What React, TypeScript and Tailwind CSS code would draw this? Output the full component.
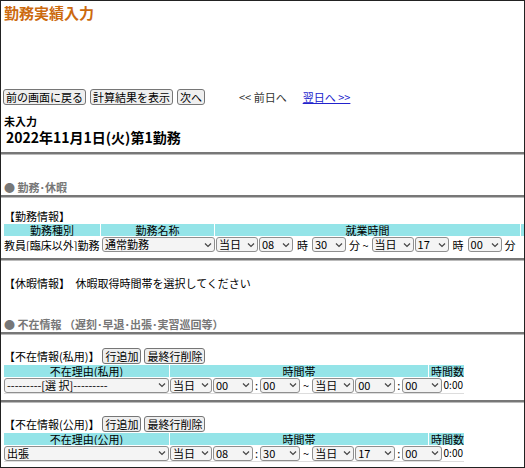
import * as React from "react";

const font = { fontFamily: '"Noto Sans CJK JP", "Noto Sans", sans-serif' };

function Sel({ w, v }: { w: number; v: string }) {
  return (
    <span
      style={{ width: w }}
      className="inline-flex h-[15px] shrink-0 items-center justify-between overflow-hidden rounded-[3px] border border-[#8f8f8f] bg-[#f4f4f4] pl-[2px] pr-[2px] text-[11px] leading-[13px] text-black"
    >
      <span className="whitespace-nowrap">{v}</span>
      <svg width="8" height="6" viewBox="0 0 8 6" className="shrink-0">
        <path d="M1 1.5 L4 4.5 L7 1.5" fill="none" stroke="#444" strokeWidth="1.2" />
      </svg>
    </span>
  );
}

function Btn({ children }: { children: React.ReactNode }) {
  return (
    <span className="inline-flex h-[16px] items-center overflow-hidden rounded-[3px] border border-[#767676] bg-[#efefef] px-[2px] text-[11px] leading-[14px] text-black">
      {children}
    </span>
  );
}

function Hr() {
  return <div className="h-[3px] border-b border-[#bbb] bg-[#777]" />;
}

function AbsenceTable({ label, reason, sel, t }: { label: string; reason: string; sel: string; t: string[] }) {
  return (
    <div className="px-[3px]">
      <div className="flex h-[18px] items-center gap-[3px] text-[11px] leading-[14px]">
        <span>{label}</span>
        <Btn>行追加</Btn>
        <Btn>最終行削除</Btn>
      </div>
      <div className="w-[460px] text-[11px] leading-[12px]">
        <div className="flex h-[12px] items-center overflow-hidden bg-[#94e4e8]">
          <div className="w-[166px] border-r border-white text-center">不在理由({reason})</div>
          <div className="w-[259px] border-r border-white text-center">時間帯</div>
          <div className="flex-1 text-right">時間数</div>
        </div>
        <div className="flex h-[17px] items-center gap-[1px] border-b border-[#ddd]">
          <Sel w={165} v={sel} />
          <Sel w={42} v="当日" />
          <Sel w={40} v={t[0]} />
          <span className="px-[1px]">:</span>
          <Sel w={40} v={t[1]} />
          <span className="px-[2px]">~</span>
          <Sel w={42} v="当日" />
          <Sel w={40} v={t[2]} />
          <span className="px-[1px]">:</span>
          <Sel w={40} v={t[3]} />
          <span className="flex-1 pr-[1px] text-right text-[10px]">0:00</span>
        </div>
      </div>
    </div>
  );
}

export default function App() {
  return (
    <div style={font} className="h-[468px] w-[525px] overflow-hidden border border-[#222] bg-white text-black">
      <div className="px-[3px] pt-[2px] text-[15px] font-bold leading-[20px] text-[#cc6a0e]">勤務実績入力</div>
      <div className="h-[65px]" />
      <div className="flex h-[18px] items-center gap-[4px] px-[2px] text-[11px] leading-[14px]">
        <Btn>前の画面に戻る</Btn>
        <Btn>計算結果を表示</Btn>
        <Btn>次へ</Btn>
        <span className="ml-[30px] text-[#333]">&lt;&lt; 前日へ</span>
        <span className="ml-[12px] text-[#2222cc] underline">翌日へ &gt;&gt;</span>
      </div>
      <div className="mt-[8px] px-[3px] text-[11px] font-bold leading-[14px]">未入力</div>
      <div className="px-[5px] text-[14px] font-semibold leading-[18px]">2022年11月1日(火)第1勤務</div>
      <div className="h-[6px]" />
      <Hr />
      <div className="h-[24px]" />
      <div className="px-[3px] text-[11px] font-bold leading-[16px] text-[#777]">● 勤務･休暇</div>
      <Hr />
      <div className="h-[10px]" />
      <div className="px-[3px] text-[11px] leading-[16px]">【勤務情報】</div>
      <div className="w-[560px] px-[3px] text-[11px] leading-[12px]">
        <div className="flex h-[12px] items-center overflow-hidden bg-[#94e4e8]">
          <div className="w-[97px] border-r border-white text-center">勤務種別</div>
          <div className="w-[114px] border-r border-white text-center">勤務名称</div>
          <div className="w-[306px] border-r border-white text-center">就業時間</div>
        </div>
        <div className="flex h-[17px] items-center gap-[1px] whitespace-nowrap">
          <span className="w-[97px] overflow-hidden">教員[臨床以外]勤務</span>
          <Sel w={113} v="通常勤務" />
          <Sel w={42} v="当日" />
          <Sel w={34} v="08" />
          <span className="px-[3px]">時</span>
          <Sel w={34} v="30" />
          <span className="px-[2px]">分 ~</span>
          <Sel w={42} v="当日" />
          <Sel w={34} v="17" />
          <span className="px-[3px]">時</span>
          <Sel w={34} v="00" />
          <span className="px-[2px]">分</span>
        </div>
      </div>
      <div className="h-[5px]" />
      <Hr />
      <div className="h-[14px]" />
      <div className="px-[3px] text-[11px] leading-[16px]">【休暇情報】　休暇取得時間帯を選択してください</div>
      <div className="h-[25px]" />
      <div className="px-[3px] text-[11px] font-bold leading-[16px] text-[#777]">● 不在情報 （遅刻･早退･出張･実習巡回等）</div>
      <Hr />
      <div className="h-[12px]" />
      <AbsenceTable label="【不在情報(私用)】" reason="私用" sel="---------[選 択]---------" t={["00", "00", "00", "00"]} />
      <div className="h-[6px]" />
      <Hr />
      <div className="h-[12px]" />
      <AbsenceTable label="【不在情報(公用)】" reason="公用" sel="出張" t={["08", "30", "17", "00"]} />
      <div className="h-[6px]" />
      <Hr />
    </div>
  );
}
